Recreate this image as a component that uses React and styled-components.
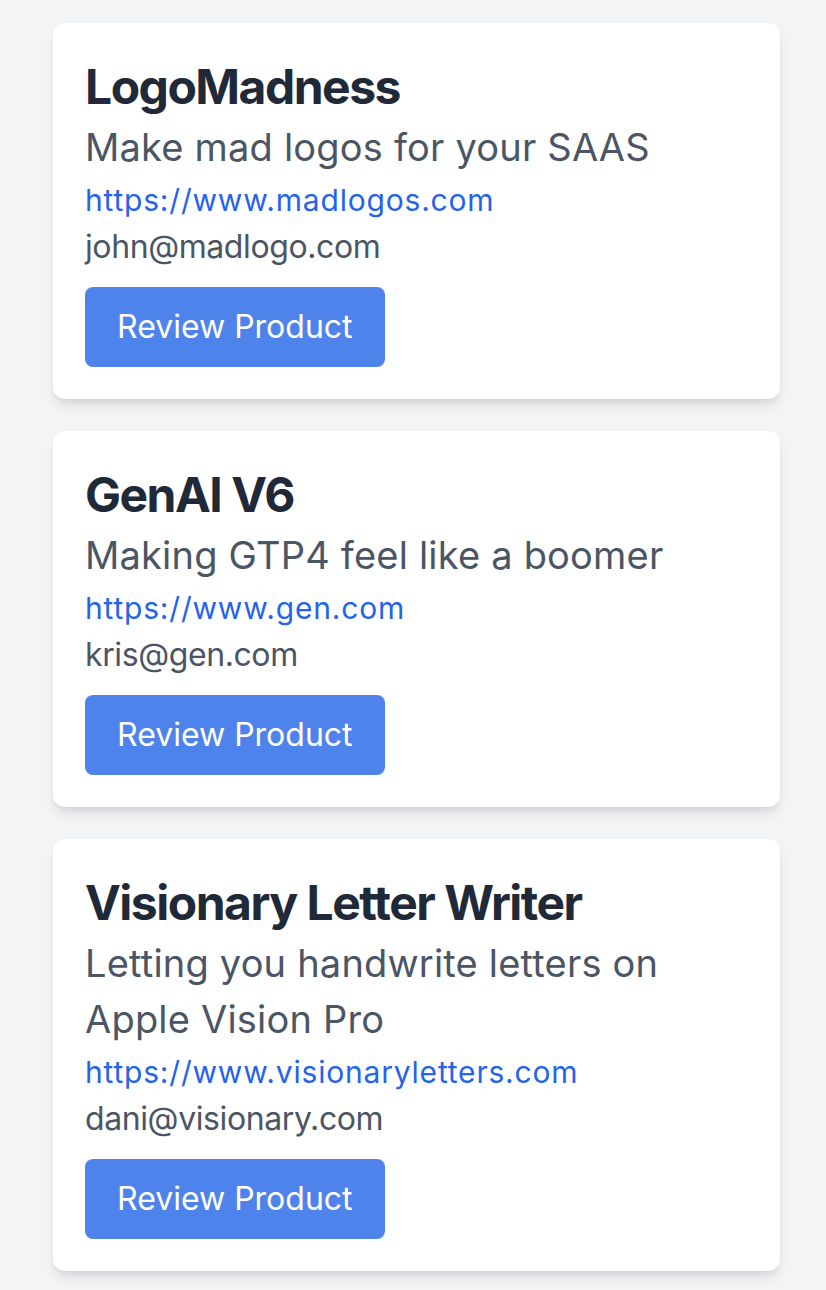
import React from "react";
import styled, { createGlobalStyle } from "styled-components";

const Global = createGlobalStyle`
  html, body {
    margin: 0;
    padding: 0;
    background: #f3f4f6;
  }
  body {
    font-family: Inter, "Noto Sans", "Liberation Sans", sans-serif;
    -webkit-font-smoothing: antialiased;
  }
`;

const Page = styled.main`
  min-height: 1290px;
  box-sizing: border-box;
  padding: 23px 46px 20px 53px;
  display: flex;
  flex-direction: column;
  gap: 32px;
`;

const Card = styled.article`
  background: #ffffff;
  border-radius: 12px;
  box-shadow: 0 8px 12px -2px rgba(0, 0, 0, 0.1), 0 3px 6px -3px rgba(0, 0, 0, 0.1);
  padding: 32px;
  display: flex;
  flex-direction: column;
  align-items: flex-start;
`;

const Title = styled.h2`
  margin: 0;
  font-size: 48px;
  line-height: 64px;
  font-weight: 700;
  color: #1f2937;
  letter-spacing: -1.5px;
`;

const Description = styled.p`
  margin: 0;
  font-size: 38px;
  line-height: 56px;
  color: #4b5563;
  letter-spacing: 0.2px;
`;

const Link = styled.a`
  margin-top: 5px;
  font-size: 30px;
  line-height: 40px;
  font-weight: 400;
  color: #2563eb;
  letter-spacing: 0.8px;
  text-decoration: none;
`;

const Email = styled.p`
  margin: 3px 0 0;
  font-size: 32px;
  line-height: 48px;
  color: #4b5563;
  letter-spacing: -0.4px;
`;

const Button = styled.button`
  margin-top: 16px;
  border: none;
  border-radius: 8px;
  background: #4f83ec;
  color: #ffffff;
  font-family: inherit;
  font-size: 32px;
  line-height: 48px;
  padding: 16px 32px;
  cursor: pointer;
`;

const products = [
  {
    name: "LogoMadness",
    description: "Make mad logos for your SAAS",
    url: "https://www.madlogos.com",
    email: "john@madlogo.com",
  },
  {
    name: "GenAI V6",
    description: "Making GTP4 feel like a boomer",
    url: "https://www.gen.com",
    email: "kris@gen.com",
  },
  {
    name: "Visionary Letter Writer",
    description: "Letting you handwrite letters on Apple Vision Pro",
    url: "https://www.visionaryletters.com",
    email: "dani@visionary.com",
  },
];

export default function App() {
  return (
    <>
      <Global />
      <Page>
        {products.map((p) => (
          <Card key={p.name}>
            <Title>{p.name}</Title>
            <Description>{p.description}</Description>
            <Link href={p.url}>{p.url}</Link>
            <Email>{p.email}</Email>
            <Button>Review Product</Button>
          </Card>
        ))}
      </Page>
    </>
  );
}
